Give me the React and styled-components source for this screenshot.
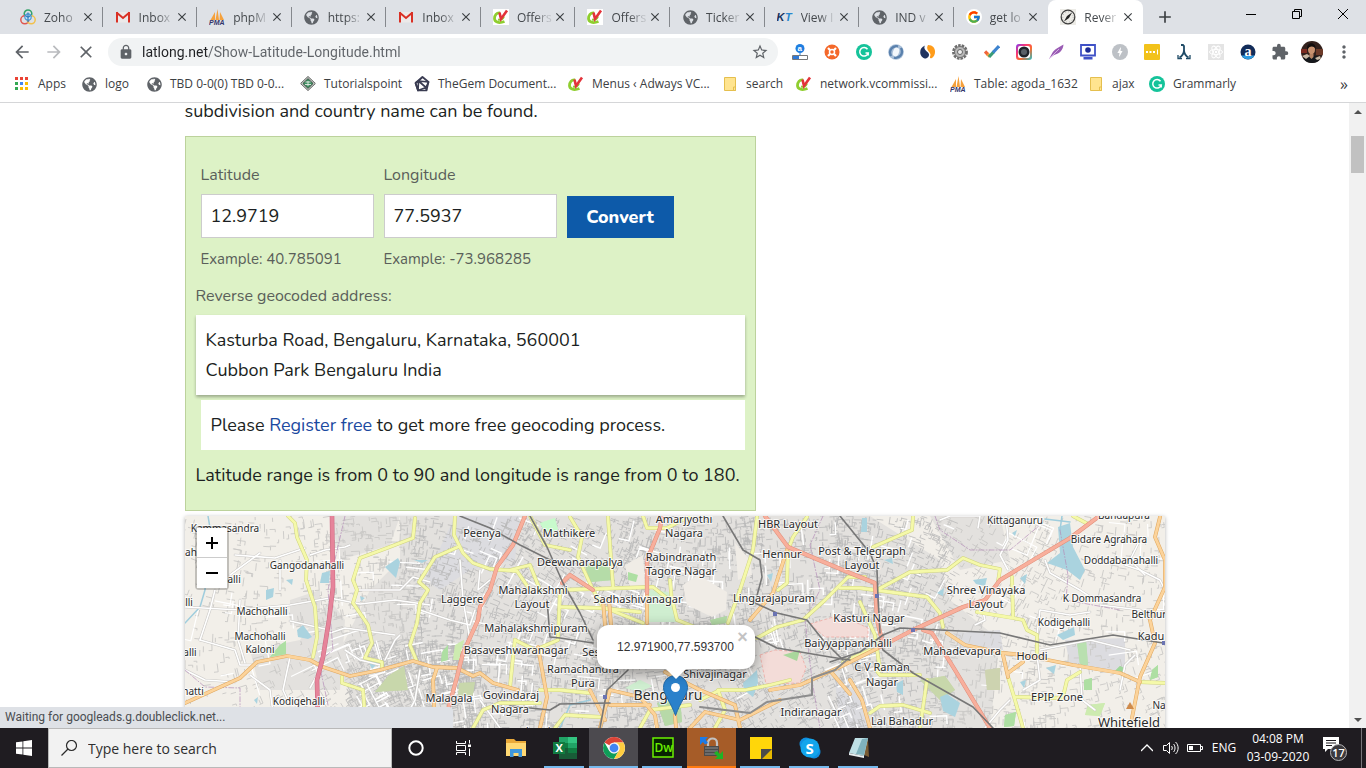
import React from 'react';
import styled, { createGlobalStyle, css } from 'styled-components';
import {
  MdExtension, MdLock, MdStarBorder, MdArrowBack, MdArrowForward,
  MdClose, MdMoreVert, MdAdd, MdBolt,
} from 'react-icons/md';
import { FaGlobeAmericas } from 'react-icons/fa';
import { FcGoogle } from 'react-icons/fc';

const UI = '"Segoe UI", "Open Sans", "Noto Sans", sans-serif';
const PAGE = 'Nunito, Lato, "Open Sans", sans-serif';

const GlobalStyle = createGlobalStyle`
  *, *::before, *::after { box-sizing: border-box; }
  html, body { margin: 0; padding: 0; }
  body { font-family: ${UI}; background: #fff; overflow: hidden; }
  button, input { font: inherit; color: inherit; margin: 0; }
  button { background: none; border: 0; padding: 0; }
  svg { display: block; flex: none; }
`;

const Screen = styled.div`
  display: flex;
  flex-direction: column;
  height: 100vh;
`;

/* ---------- tab strip ---------- */
const TabStrip = styled.header`
  display: flex;
  flex: none;
  height: 34px;
  padding-left: 8px;
  background: #dee1e6;
`;
const Tabs = styled.nav`
  display: flex;
  flex: 1;
  min-width: 0;
`;
const Tab = styled.div`
  display: flex;
  flex: 1 1 0;
  align-items: center;
  min-width: 0;
  padding: 0 7px 0 12px;
  position: relative;
  font-size: 12px;
  color: #45494d;
  ${(p) => p.$active ? css`
    background: #fff;
    border-radius: 8px 8px 0 0;
  ` : css`
    &::after {
      content: '';
      position: absolute;
      right: 0;
      top: 7px;
      height: 20px;
      width: 1px;
      background: ${p.$last ? 'transparent' : '#85888d'};
    }
  `}
`;
const TabTitle = styled.span`
  flex: 1;
  min-width: 0;
  margin: 0 0 0 8px;
  overflow: hidden;
  white-space: nowrap;
  mask-image: linear-gradient(90deg, #000 50%, rgba(0, 0, 0, 0.2) 90%);
`;
const TabClose = styled.button`
  display: grid;
  place-items: center;
  width: 16px;
  height: 16px;
  color: #3c4043;
`;
const NewTab = styled.button`
  display: grid;
  place-items: center;
  width: 44px;
  margin-right: 41px;
  color: #3c4043;
`;
const WindowButton = styled.button`
  display: grid;
  place-items: center;
  width: 46px;
  height: 28px;
`;

/* ---------- toolbar ---------- */
const Toolbar = styled.div`
  display: flex;
  flex: none;
  align-items: center;
  height: 36px;
  padding: 0 6px;
  background: #fff;
`;
const ToolButton = styled.button`
  display: grid;
  place-items: center;
  width: 32px;
  height: 32px;
  color: ${(p) => (p.$faded ? '#b9bbbe' : '#5f6368')};
`;
const AddressBar = styled.div`
  display: flex;
  flex: 1;
  align-items: center;
  gap: 8px;
  min-width: 0;
  height: 28px;
  margin: 0 6px;
  padding: 0 9px 0 10px;
  border-radius: 14px;
  background: #f1f3f4;
  color: #5f6368;
`;
const Url = styled.input`
  flex: 1;
  min-width: 0;
  border: 0;
  padding: 0;
  outline: 0;
  font-family: Roboto, sans-serif;
  font-size: 14px;
  background: linear-gradient(90deg, #202124 66px, #5f6368 66px);
  background-clip: text;
  -webkit-background-clip: text;
  -webkit-text-fill-color: transparent;
`;

/* ---------- bookmarks ---------- */
const Bookmarks = styled.nav`
  display: flex;
  flex: none;
  align-items: center;
  height: 33px;
  padding: 0 14px 4px;
  border-bottom: 1px solid #d5d6d8;
  padding-top: 0;
`;
const Bookmark = styled.a`
  display: flex;
  align-items: center;
  gap: 8px;
  flex: 0 1 ${(p) => p.$width}px;
  min-width: 0;
  padding-right: 8px;
  font-size: 12px;
  line-height: 20px;
  color: #3c4043;
  text-decoration: none;
  white-space: nowrap;
`;
const More = styled.button`
  margin-left: auto;
  padding-right: 4px;
  font-size: 16px;
  line-height: 20px;
  color: #3c4043;
`;

/* ---------- web page ---------- */
const Viewport = styled.div`
  display: flex;
  flex: 1;
  min-height: 0;
  position: relative;
  overflow: hidden;
`;
const Main = styled.main`
  flex: 1;
  min-width: 0;
  overflow: hidden;
  font-family: ${PAGE};
  font-size: 18px;
  line-height: 30px;
  color: #1c1f22;
`;
const Column = styled.div`
  max-width: 980px;
  margin: -7px auto 0;
`;
const Paragraph = styled.p`
  margin: 0 0 10px;
`;
const Panel = styled.section`
  max-width: 571px;
  padding: 23px 10px 20px;
  border: 1px solid #bcd29c;
  background: #ddf2c6;
`;
const Form = styled.form`
  display: flex;
  gap: 10px;
  padding-left: 5px;
  margin-bottom: 7px;
`;
const Field = styled.div`
  display: flex;
  flex-direction: column;
  width: 173px;
`;
const Label = styled.label`
  font-size: 16px;
  color: #5a5f5a;
`;
const Hint = styled.span`
  font-size: 15px;
  color: #5a5f5a;
`;
const TextInput = styled.input`
  height: 44px;
  margin: 4px 0 6px;
  padding: 0 9px;
  width: 100%;
  border: 1px solid #ccc;
  background: #fff;
`;
const Convert = styled.button`
  align-self: flex-start;
  width: 107px;
  height: 42px;
  margin-top: 36px;
  background: #0d5aa9;
  color: #fff;
  font-weight: 800;
`;
const AddressTitle = styled.div`
  margin-bottom: 4px;
  font-size: 16px;
  color: #5a5f5a;
`;
const Address = styled.address`
  padding: 10px;
  background: #fff;
  font-style: normal;
  box-shadow: 0 2px 3px rgba(0, 0, 0, 0.3);
`;
const Notice = styled.div`
  margin: 5px 0 10px 5px;
  padding: 10px;
  background: #fff;
`;
const Link = styled.a`
  color: #1b49a0;
  text-decoration: none;
`;

/* ---------- map ---------- */
const MapBox = styled.section`
  position: relative;
  height: 300px;
  margin-top: 5px;
  overflow: hidden;
  background: #f2efe9;
  box-shadow: 0 1px 4px rgba(0, 0, 0, 0.3);
  font-family: "Liberation Sans", Arial, sans-serif;
`;
const ZoomBar = styled.div`
  position: absolute;
  left: 10px;
  top: 10px;
  border: 2px solid rgba(0, 0, 0, 0.2);
  border-radius: 4px;
  background-clip: padding-box;
`;
const ZoomButton = styled.button`
  display: grid;
  place-items: center;
  width: 30px;
  height: 30px;
  background: #fff;
  color: #000;
  &:first-child { border-bottom: 1px solid #ccc; }
`;
const Popup = styled.div`
  position: absolute;
  left: 412px;
  top: 109px;
  width: 158px;
  height: 44px;
  border-radius: 12px;
  background: #fff;
  box-shadow: 0 3px 14px rgba(0, 0, 0, 0.4);
  font-size: 12px;
  line-height: 44px;
  text-align: center;
  color: #333;
  &::after {
    content: '';
    position: absolute;
    left: 69px;
    top: 44px;
    border: 10px solid transparent;
    border-top-color: #fff;
    border-bottom: 0;
  }
`;
const PopupClose = styled.button`
  position: absolute;
  right: 4px;
  top: 4px;
  width: 16px;
  height: 16px;
  font-size: 18px;
  line-height: 16px;
  font-weight: 700;
  color: #c3c3c3;
`;
const Pin = styled.svg`
  position: absolute;
  left: 478px;
  top: 159px;
`;

const ScrollBar = styled.div`
  display: flex;
  flex: none;
  flex-direction: column;
  align-items: center;
  width: 17px;
  background: #f1f1f1;
`;
const ScrollArrow = styled.button`
  display: grid;
  place-items: center;
  width: 17px;
  height: 17px;
`;
const ScrollThumb = styled.div`
  width: 13px;
  height: 37px;
  margin: 16px 0 auto;
  background: #c1c1c1;
`;
const StatusBubble = styled.div`
  position: absolute;
  left: 0;
  bottom: 0;
  width: 453px;
  height: 21px;
  padding-left: 5px;
  border-radius: 0 4px 0 0;
  background: #dee1e6;
  font-family: Roboto, sans-serif;
  font-size: 12px;
  line-height: 21px;
  color: #4a4d51;
`;

/* ---------- taskbar ---------- */
const Taskbar = styled.footer`
  display: flex;
  flex: none;
  height: 40px;
  background: #1f1c21;
  color: #fff;
`;
const TaskButton = styled.button`
  display: grid;
  place-items: center;
  position: relative;
  width: ${(p) => p.$width || 49}px;
  height: 40px;
  background: ${(p) => p.$bg || 'none'};
  &::after {
    content: '';
    position: absolute;
    left: ${(p) => (p.$bg ? 0 : 4)}px;
    right: ${(p) => (p.$bg ? 0 : 5)}px;
    bottom: 0;
    height: 2px;
    background: ${(p) => p.$line || 'transparent'};
  }
`;
const Apps = styled.div`
  display: flex;
  padding-left: 3px;
  margin-right: auto;
`;
const SearchBox = styled.label`
  display: flex;
  align-items: center;
  gap: 11px;
  width: 344px;
  padding: 0 12px;
  border: 1px solid #b9b9b9;
  background: #f2f2f2;
  color: #2b2b2b;
`;
const SearchInput = styled.input`
  flex: 1;
  min-width: 0;
  border: 0;
  padding: 0;
  background: none;
  outline: 0;
  font-size: 14px;
  &::placeholder { color: #2f2f2f; opacity: 1; }
`;
const TrayItem = styled.button`
  display: grid;
  place-items: center;
  align-content: center;
  width: ${(p) => p.$width}px;
  font-size: 12px;
  line-height: 18px;
  white-space: nowrap;
`;
const ShowDesktop = styled.button`
  width: 5px;
  margin-left: 6px;
  border-left: 1px solid #77757a;
`;

/* ---------- icons ---------- */
const Svg = ({ size = 16, children, ...rest }) => (
  <svg width={size} height={size} viewBox="0 0 16 16" fill="none" aria-hidden="true" {...rest}>{children}</svg>
);
const IconCell = styled.span`
  display: grid;
  place-items: center;
  flex: none;
  width: 16px;
  height: 16px;
`;
const Globe = () => <IconCell><FaGlobeAmericas size={15} color="#5f6368" /></IconCell>;
const Zoho = () => (
  <Svg strokeWidth="1.500">
    <circle cx="8" cy="4.800" r="3.800" stroke="#35a26b" />
    <circle cx="4.800" cy="10.800" r="4" stroke="#e0574f" />
    <circle cx="11.200" cy="10.800" r="4" stroke="#f2c14b" />
    <circle cx="8" cy="8" r="3.200" fill="#cfe3f3" stroke="#4b9ad6" strokeWidth="1.200" />
    <path d="M8 3.500V13M5.500 6.500 8 8.500l2.500-2" stroke="#2f7fc1" strokeWidth="1.200" />
  </Svg>
);
const Gmail = () => (
  <Svg>
    <path d="M1 3h14v10.500H1z" fill="#ece9e9" />
    <path d="M1.500 3.500 8 9l6.500-5.500" stroke="#d93025" strokeWidth="2" />
    <path d="M1 3h2v10.500H1zM13 3h2v10.500h-2z" fill="#d93025" />
  </Svg>
);
const Pma = () => (
  <Svg>
    <path d="M1.500 11 6 3v8zM6.500 11 8.500 0l1.500 11zM10.500 11l.5-8L15 11z" fill="#f5a13c" />
    <text x="0" y="15.500" fontSize="7" fontWeight="700" fontStyle="italic" fontFamily="Liberation Sans" fill="#34356b">PMA</text>
  </Svg>
);
const Vcom = ({ bg }) => (
  <Svg>
    {bg && <path d="M0 0h16v16H0z" fill="#fff" />}
    <path d="M7 4C3.500 3.500 1.500 6.500 1.500 9.500S5 15 11.500 12.500" stroke="#8fce2f" strokeWidth="2.800" />
    <path d="M5 10.500c3 .8 5-.5 6-3" stroke="#8fce2f" strokeWidth="2" />
    <path d="M6.500 3.500 8 10 14 1.500" stroke="#e3333a" strokeWidth="2.600" />
  </Svg>
);
const Kt = () => (
  <Svg>
    <text x="-0.500" y="12" fontSize="11" fontWeight="700" fontStyle="italic" fontFamily="Liberation Sans" fill="#16305e">K</text>
    <text x="8" y="12" fontSize="11" fontWeight="700" fontStyle="italic" fontFamily="Liberation Sans" fill="#2787cf">T</text>
  </Svg>
);
const GoogleIcon = () => (
  <svg width="16" height="16" viewBox="0 0 16 16" aria-hidden="true">
    <circle cx="8" cy="8" r="8" fill="#fff" />
    <FcGoogle x="1" y="1" size={14} />
  </svg>
);
const Compass = () => (
  <Svg>
    <path d="M0 0h16v16H0z" fill="#ecebe6" />
    <circle cx="8" cy="8" r="6.800" stroke="#3d3d3d" strokeWidth="1.200" />
    <circle cx="8" cy="8" r="5.200" stroke="#8d8d8d" strokeWidth="0.600" strokeDasharray="1 2" />
    <path d="m12 3.500-3 5.500-2-2zM4 12.500 7 7l2 2z" fill="#222" />
  </Svg>
);
const AppsIcon = () => (
  <Svg>
    {['#ea4335', '#ea4335', '#ea4335', '#34a853', '#4285f4', '#fbbc04', '#34a853', '#fbbc04', '#fbbc04'].map((c, i) => (
      <rect key={i} x={1 + (i % 3) * 5} y={1 + Math.floor(i / 3) * 5} width="3" height="3" fill={c} />
    ))}
  </Svg>
);
const Tutorials = () => (
  <Svg>
    <path d="m8 .500 7.300 7L8 14.500.700 7.500z" fill="#e4ebe4" stroke="#4d4d4d" />
    <path d="m8 2.500 5.200 5L8 12.500l-5.200-5z" fill="#3f8f62" stroke="#333" strokeWidth=".8" />
    <path d="M5.500 6h5M8 5v5M5 8.500h6" stroke="#e4ebe4" strokeWidth=".9" />
  </Svg>
);
const Gem = () => (
  <Svg stroke="#3a3c52" strokeWidth="1.700" strokeLinejoin="round">
    <path d="m8.500 1 6 5-2 8.500H4L1.500 7z" />
    <path d="m8.500 1-4 4L4 14.500 12 11.500 14.500 6 4.500 5M4.500 5 12 11.500M1.500 7l3-2M1.500 7 4 14.500M12 11.500l.5 3" />
  </Svg>
);
const Folder = () => (
  <Svg>
    <path d="M2.500 1.500h11v13h-11z" fill="#ffe48f" stroke="#e5bf4e" />
    <path d="M11.500 14.500v-3.500h2v3.500z" fill="#ffe48f" stroke="#e5bf4e" />
  </Svg>
);
const Grammarly = () => (
  <Svg>
    <circle cx="8" cy="8" r="8" fill="#15c39a" />
    <path d="M11.500 5.200A4.300 4.300 0 1 0 12.200 9H9.500m2.700 0v2.500" stroke="#fff" strokeWidth="1.500" />
  </Svg>
);
const extensionIcons = [
  ['Alexa rank', <Svg key="i"><circle cx="8" cy="4.500" r="4.500" fill="#1e7de0" /><text x="5.500" y="7" fontSize="8" fontWeight="700" fontFamily="Liberation Sans" fill="#fff">a</text><path d="M.5 11.500h15v4H.5z" fill="#fff" stroke="#777" /><path d="M1 12h6v3H1z" fill="#2f79d6" /><path d="M8 9v2" stroke="#1e7de0" /></Svg>],
  ['Help ring', <Svg key="i"><circle cx="8" cy="8" r="7.500" fill="#f4682a" /><circle cx="8" cy="8" r="2.500" fill="#f4682a" stroke="#fff" strokeWidth="1.500" /><path d="m4 4 2 2m4 4 2 2m0-8-2 2m-4 4-2 2" stroke="#fff" strokeWidth="2.200" /></Svg>],
  ['Grammarly', <Grammarly key="i" />],
  ['Swirl', <Svg key="i"><circle cx="8" cy="8" r="7.800" fill="#a9bfd8" /><path d="M3 12C0 6 5 1 10 2.500M13 4c3 6-2 11-7 9.500" stroke="#5a81ad" strokeWidth="2.400" /><ellipse cx="8" cy="8" rx="3" ry="4.500" fill="#f3f7fb" transform="rotate(20 8 8)" /></Svg>],
  ['Similar', <Svg key="i"><path d="M5 1.500c-2 3 1 5 3 7s1 5-2 6C-1 14-2 4 5 1.500z" fill="#20335f" /><path d="M8 1c8 0 9 9 4 13-3 1-2-1-1.500-3C11 8 5 6 8 1z" fill="#ff9c1a" /></Svg>],
  ['Gear', <Svg key="i"><circle cx="8" cy="8" r="6.500" stroke="#6e6e6e" strokeWidth="2.800" strokeDasharray="2.500 1" /><circle cx="8" cy="8" r="5.500" fill="#b8b8b8" stroke="#707070" /><circle cx="8" cy="8" r="2.500" fill="#eee" stroke="#666" /></Svg>],
  ['Checker', <Svg key="i"><path d="m1 7.500 3 3" stroke="#f1643b" strokeWidth="3.200" /><path d="m3.500 10 2.500 2.500" stroke="#f0a23b" strokeWidth="3.200" /><path d="m5 13 5-5.500" stroke="#3a9c77" strokeWidth="3.200" /><path d="m9 8.500 6-6.500" stroke="#3d83cf" strokeWidth="3.200" /></Svg>],
  ['Camera', <svg key="i" width="16" height="16" viewBox="0 0 16 16" aria-hidden="true"><defs><linearGradient id="rainbow" x1="0" y1="0" x2="1" y2="1"><stop offset="0" stopColor="#7a3af0" /><stop offset=".3" stopColor="#f6357d" /><stop offset=".6" stopColor="#fb6b30" /><stop offset="1" stopColor="#21bfc6" /></linearGradient></defs><rect width="16" height="16" rx="3" fill="url(#rainbow)" /><rect x="2" y="2" width="12" height="12" rx="2" fill="#fff" /><circle cx="8" cy="8" r="5.500" fill="#20242b" /><circle cx="8" cy="8" r="3" fill="#596068" /></svg>],
  ['Feather', <Svg key="i"><path d="M1 15 4 9.500C6 5.500 11 3 15.500.500 15 6 12 9.500 6 11z" fill="#9a5cb4" /><path d="M1 15 11 5" stroke="#e2c4ee" strokeWidth=".8" /></Svg>],
  ['Screen', <Svg key="i"><path d="M1 1h14v10.500H1z" fill="#fff" stroke="#3f51c7" strokeWidth="1.800" /><circle cx="8" cy="6" r="2.800" fill="#1d2b94" /><path d="M3.500 13h9v2.500h-9z" fill="#3f51c7" /></Svg>],
  ['Bolt', <svg key="i" width="16" height="16" viewBox="0 0 16 16" aria-hidden="true"><circle cx="8" cy="8" r="8" fill="#bdc1c6" /><MdBolt x="2" y="2" size={12} color="#fff" /></svg>],
  ['Password dots', <Svg key="i"><rect width="16" height="16" rx="1" fill="#f2c21a" /><path d="M2 7h2v2H2zM5.500 7h2v2h-2zM9 7h2v2H9z" fill="#fff" /><path d="M13.500 5.500v5" stroke="#fff" /></Svg>],
  ['Split', <Svg key="i" stroke="#1e4a66" strokeWidth="1.800"><path d="M5 1h2l1 1v4c0 4-2 6-4.500 7.500M8 6c0 4 2 6 4.500 7.500" /><path d="M6 14.500H2V11M10 14.500h4V11" strokeWidth="1.300" /></Svg>],
  ['React tools', <Svg key="i"><path d="M0 0h16v16H0z" fill="#e4e4e4" /><g stroke="#fff"><ellipse cx="8" cy="8" rx="6.500" ry="2.600" /><ellipse cx="8" cy="8" rx="6.500" ry="2.600" transform="rotate(60 8 8)" /><ellipse cx="8" cy="8" rx="6.500" ry="2.600" transform="rotate(120 8 8)" /></g><circle cx="8" cy="8" r="1.200" fill="#fff" /></Svg>],
  ['Amazon', <Svg key="i"><circle cx="8" cy="8" r="7.500" fill="#122c59" /><path d="M1.500 11.500a7.500 7.500 0 0 0 13 0z" fill="#2e9be0" /><text x="4.500" y="12" fontSize="14" fontWeight="700" fontFamily="Liberation Serif" fill="#fff">a</text></Svg>],
];

const Avatar = () => (
  <svg width="22" height="22" viewBox="0 0 22 22" aria-hidden="true">
    <defs><clipPath id="face"><circle cx="11" cy="11" r="11" /></clipPath></defs>
    <g clipPath="url(#face)">
      <path d="M0 0h22v22H0z" fill="#33211c" />
      <path d="M0 8h6v4H0z" fill="#7c2c22" /><path d="M15 8h7v6h-7z" fill="#6d3a28" />
      <path d="M1 22c1-7 5-8 8-7 5-1 10 0 11 7z" fill="#15181c" />
      <ellipse cx="10.500" cy="8.500" rx="3.500" ry="5" fill="#c9926f" />
      <path d="M6.500 9C4 0 16 0 14.500 8.500 14 5 8 4 6.500 9z" fill="#120e0d" />
      <path d="M8.500 13h4v3l-2 2-2-2z" fill="#b98463" />
      <path d="m1 15 5-2 3 2-4 3zM14 17l5-2 1 3-4 1z" fill="#c9b8a4" />
    </g>
  </svg>
);

const WindowsLogo = () => <Svg><path d="m0 2.300 6.500-.9v6.200H0zM7.300 1.300 16 0v7.600H7.300zM0 8.400h6.500v6.200L0 13.700zM7.300 8.400H16V16l-8.700-1.200z" fill="#fff" /></Svg>;
const Magnifier = () => <Svg stroke="#2b2b2b" strokeWidth="1.200"><circle cx="10.500" cy="5.500" r="5" /><path d="M7 9 .5 15.500" /></Svg>;
const TaskView = () => <Svg stroke="#fff"><path d="M.5 1v2.500h9V1M.5 15v-2.500h9V15M.5 5.500h9v5h-9zM13.500 0v3.500M13.500 8.500V16" /><path d="M12 4.500h3v2.500h-3z" fill="#fff" stroke="none" /></Svg>;
const Explorer = () => (
  <svg width="22" height="22" viewBox="0 0 22 22" aria-hidden="true"><path d="M1 2h8l2 2h10v15H1z" fill="#e9a93a" /><path d="M1 6h20v13H1z" fill="#ffd873" /><path d="M5 20v-8h12v8h-3.500v-4h-5v4z" fill="#3f97dc" /></svg>
);
const Excel = () => (
  <svg width="24" height="22" viewBox="0 0 24 22" aria-hidden="true"><path d="M6 0h9v6H6z" fill="#21a366" /><path d="M15 0h9v6h-9z" fill="#33c481" /><path d="M6 6h9v5H6z" fill="#107c41" /><path d="M15 6h9v5h-9z" fill="#21a366" /><path d="M6 11h18v11H6z" fill="#185c37" /><path d="M15 11h9v5h-9z" fill="#107c41" /><path d="M0 5h12v12H0z" fill="#107c41" /><text x="2.500" y="15" fontSize="11" fontWeight="700" fontFamily="Open Sans" fill="#fff">X</text></svg>
);
const Chrome = () => (
  <svg width="22" height="22" viewBox="0 0 22 22" aria-hidden="true"><circle cx="11" cy="11" r="11" fill="#fff" /><path d="M11 11 1.500 5.500A11 11 0 0 1 20.500 5.500H11z" fill="#db4437" /><path d="M1.500 5.500A11 11 0 0 0 11 22l4.800-8.300L11 16.500 6.200 13.800z" fill="#0f9d58" /><path d="M20.500 5.500A11 11 0 0 1 11 22l4.800-8.300a5.500 5.500 0 0 0-4.800-8.200z" fill="#ffcd40" /><circle cx="11" cy="11" r="5.500" fill="#f1f1f1" /><circle cx="11" cy="11" r="4.300" fill="#4285f4" /></svg>
);
const Dreamweaver = () => (
  <svg width="22" height="22" viewBox="0 0 22 22" aria-hidden="true"><path d="M1 1h20v19H1z" fill="#072401" stroke="#6bf100" strokeWidth="1.500" /><text x="2.500" y="15" fontSize="12" fontFamily="Open Sans" fontWeight="600" fill="#6bf100">Dw</text></svg>
);
const RemoteLock = () => (
  <svg width="24" height="24" viewBox="0 0 24 24" fill="none" aria-hidden="true"><path d="M8 11V7c0-6 9-6 9 0v4" stroke="#c2c2c2" strokeWidth="2.200" /><path d="M4 10h15v10H4z" fill="#4b4b4b" /><path d="M5 12h13M5 15h13M5 18h13" stroke="#8d8d8d" /><path d="M0 1h8L5.500 3.500 8 7 5 8.500 3 6 0 9z" fill="#1c7be8" /><path d="M23 23h-8l2.500-2.500L14 17l3-2 3 3 3-3z" fill="#1fb326" /></svg>
);
const Sticky = () => <svg width="22" height="22" viewBox="0 0 22 22" aria-hidden="true"><path d="M0 0h22v12L12 22H0z" fill="#ffd60a" /><path d="M11 22V12h11v1l-9 9z" fill="#4a4a4a" /><path d="M22 12v10H12z" fill="#e6b800" /></svg>;
const Skype = () => (
  <svg width="22" height="22" viewBox="0 0 22 22" aria-hidden="true"><circle cx="7" cy="7" r="6.500" fill="#0f8fe0" /><circle cx="15" cy="15" r="6.500" fill="#0f8fe0" /><circle cx="11" cy="11" r="9.500" fill="#12a5ec" /><text x="6.500" y="16.500" fontSize="15" fontWeight="700" fontFamily="Open Sans" fill="#fff">S</text></svg>
);
const Notepad = () => <svg width="22" height="22" viewBox="0 0 22 22" aria-hidden="true"><path d="m7 1 13 2 1 17-5-2z" fill="#7a5b33" /><path d="M7 1h13l-4 18-15-3z" fill="#bfe0e6" /><path d="m14 2 6-1-4 17-8-1z" fill="#7fb2bd" /><path d="m1 16 15 3v2L1 18z" fill="#e8eef0" /></svg>;

/* ---------- map drawing ---------- */
const seeded = (seed) => () => {
  seed = (seed * 1664525 + 1013904223) % 4294967296;
  return seed / 4294967296;
};
const buildStreets = (seed, count, areas, min, max) => {
  const rnd = seeded(seed);
  let d = '';
  for (let i = 0; i < count; i += 1) {
    const [x0, y0, w, h] = areas[Math.floor(rnd() * areas.length)];
    const x = x0 + rnd() * w;
    const y = y0 + rnd() * h;
    const tilt = Math.sin(x / 70) * 0.3 + Math.cos(y / 45) * 0.25;
    const len = min + rnd() * (max - min);
    const a = tilt + (rnd() > 0.5 ? Math.PI / 2 : 0);
    const dx = Math.cos(a) * len;
    const dy = Math.sin(a) * len;
    d += `M${x.toFixed(1)} ${y.toFixed(1)}l${dx.toFixed(1)} ${dy.toFixed(1)}`;
    if (rnd() > 0.5) d += `l${(-dy * 0.5).toFixed(1)} ${(dx * 0.5).toFixed(1)}`;
  }
  return d;
};
const dense = [[400, 516, 130, 220], [520, 516, 130, 220], [620, 516, 130, 220], [740, 516, 130, 220], [830, 516, 120, 220], [345, 640, 130, 90]];
const sparse = [[185, 516, 220, 220], [310, 516, 110, 220], [930, 516, 120, 220], [1020, 516, 145, 220]];
const greyDense = buildStreets(7, 5200, dense, 3, 9);
const greySparse = buildStreets(11, 1700, sparse, 3, 9);
const whiteDense = buildStreets(19, 260, dense, 8, 24);
const whiteSparse = buildStreets(23, 50, sparse, 12, 34);

const residential = [
  'M400 516H870L940 560 950 600 1000 640 990 728H345L350 690 330 660 345 640 370 590 400 560Z',
  'M250 650 300 640 330 600 345 620 340 690 260 690Z',
  'M290 600 320 590 320 630 290 625Z', 'M930 516H1000L1010 560 960 570Z', 'M330 516H400L390 545 340 560Z',
];
const industrial = ['M455 516H520L515 560 470 570 440 590 425 580Z', 'M955 633 1000 630 1003 650 960 650Z', 'M1065 640 1125 638 1125 672 1070 665Z', 'M835 680 870 700 870 728 840 728Z'];
const greens = [
  ['M280 645 286 641V654L270 657Z', '#aedfa3'], ['M388 676 404 666 408 690 375 692Z', '#c8d7ab'], ['M455 645 464 640 459 660 453 660Z', '#cdebb0'],
  ['M442 652 448 645V660L441 662Z', '#aedfa3'], ['M459 683 475 682 473 695 458 697Z', '#c8d7ab'], ['M585 565 606 560 613 580 590 582Z', '#b5dca8'],
  ['M540 523 555 518 558 530 545 533Z', '#c8facc'], ['M648 590 668 592 677 622 648 622Z', '#cfeed0'], ['M628 572 638 575 636 582 628 580Z', '#aedfa3'],
  ['M657 703 680 698 682 722 665 726Z', '#b7d9a8'], ['M920 680 945 676 955 690 940 700Z', '#c8d7ab'], ['M985 670 1000 668 1000 690 987 690Z', '#cdd3b0'],
  ['M1077 642 1086 640 1088 665 1080 665Z', '#b9e0b0'], ['M1005 715 1016 712 1014 726 1004 727Z', '#aedfa3'], ['M1084 680 1092 678 1092 690 1084 690Z', '#aedfa3'],
  ['M1120 666 1124 668 1124 673 1115 671Z', '#9fd79a'], ['M710 620 727 616 726 623 712 625Z', '#b5dca8'], ['M783 655 800 650 797 661Z', '#a9d79c'],
  ['M1088 705 1105 703 1100 716 1085 715Z', '#cdebb0'], ['M1152 670 1158 665 1158 677 1150 680Z', '#aedfa3'], ['M625 688 640 680 652 686 640 692Z', '#cfeed0'],
];
const lakes = [
  'M385 567 398 558 400 562 396 578Z', 'M322 573 330 571 329 583 320 583Z', 'M266 590 274 588 273 597 266 600Z', 'M286 580 293 579 292 585Z',
  'M297 630 303 625 312 637 308 639 298 637Z', 'M368 661 379 662 372 669Z', 'M414 560 428 560 422 563Z', 'M360 596 365 598 361 601Z',
  'M254 700 258 697 257 704Z', 'M1058 527 1070 523 1073 547 1085 570 1080 580 1067 570 1047 563 1060 553Z', 'M940 697 947 694 960 703 955 717 943 711Z',
  'M743 683 757 670 758 683 753 697 744 690Z', 'M1057 635 1074 627 1075 635 1063 640Z', 'M973 580 987 578 985 586 976 584Z', 'M1020 578 1027 574 1025 584Z',
  'M1046 668 1056 665 1054 674Z', 'M896 684 903 680 903 695 897 692Z', 'M1020 682 1026 680 1024 688Z', 'M767 575 773 573 771 582Z', 'M862 518H867V532H861Z',
  'M884 560 892 558 893 564Z', 'M937 593 944 588 943 596Z', 'M1012 533 1017 530 1015 536Z',
];
const military = ['M810 624 840 615 868 628 868 637 825 637Z', 'M760 655 775 650 800 652 806 668 800 683 766 684Z'];
const bareLand = ['M683 585 698 575 727 592 726 610 712 617 687 605Z', 'M625 565 643 555 645 585 630 588Z', 'M735 543 750 560 752 575 738 580Z'];
const yellow = [
  '288,516 295,523 297,537 307,560 306,580 315,607 317,637 313,657', '415,518 413,538 387,548 360,558 353,580 357,590 353,603 368,625 372,643 365,658 382,662 382,668',
  '455,516 454,535 463,553 473,563 490,569 517,571 530,590', '458,547 435,557 419,582 428,590 420,603 417,623 410,645 417,662', '342,677 342,683 363,690 366,728',
  '515,640 513,657 510,687', '473,728 483,710 500,703 540,703', '757,517 753,550 740,590 728,623', '807,517 793,537 788,550 787,583 778,590',
  '757,638 777,627 803,620 825,600 848,577 865,577', '560,590 653,587 673,603 677,620 710,633 728,640', '570,517 582,537 578,557 593,590 603,607 643,623', '608,517 613,587',
  '560,590 558,640 535,650 515,640', '560,607 600,608 640,612', '510,570 530,565 540,590', '643,516 647,528 667,528 690,516', '670,580 672,603', '530,516 545,545 570,550',
  '877,590 910,572 947,570 963,558 980,565 1000,569 998,582', '840,588 860,588 927,597 940,613 943,627', '873,547 912,530 913,517', '977,612 1013,618 1023,620 1027,630 1037,635 1037,653',
  '1012,577 1013,617', '1140,682 1165,683', '1008,677 1015,700 1023,728', '1063,697 1067,680 1080,672', '1015,697 1063,698', '870,713 880,706 903,705 930,713', '860,602 875,635 880,670',
  '843,662 870,650', '927,680 920,728', '700,700 720,690 745,690 770,685 790,680', '718,690 725,710 715,728', '540,690 560,690 590,693', '555,728 565,715 600,717', '640,728 650,710 690,705', '1073,516 1088,524', '877,671 880,675 920,675',
];
const orange = [
  '185,703 240,678 257,662 287,656 310,660 323,667 350,676 380,670 413,661 433,667 457,668 473,676 480,673 493,683 518,690', '437,668 433,680 435,728',
  '788,547 773,593 750,620', '647,593 647,623', '538,647 547,697 540,728', '600,728 610,690 640,697 655,715 657,728', '603,600 605,625', '609,600 611,625', '880,647 840,667 800,685 770,690',
  '947,633 965,645 1003,653 1023,655 1073,665 1120,673 1140,682', '1160,517 1155,537 1165,560 1165,587 1150,620 1155,643 1140,677 1130,728', '1003,655 1008,677', '1008,673 1023,662',
  '665,672 700,690 735,705 740,728', '675,715 676,728', '850,680 862,700 870,728', '590,690 605,720', '610,705 650,705', '690,728 705,712 740,720 780,700', '832,673 850,694',
];
const red = [
  '525,516 513,545 497,567 490,590 480,607 478,620 463,653 457,677 443,728', '662,516 660,528 647,560 647,593', '765,516 788,547 850,573 875,583 877,620 882,640',
  '562,583 570,575 593,590', '1098,517 1070,538 1000,580 985,600 963,607 913,630 880,647', '923,630 932,633 955,670 990,728',
];
const rail = [
  '460,516 490,528 520,545 560,565', '530,516 547,547 563,583 580,613 593,640', '628,670 607,690 600,728', '547,600 550,637 560,638 593,643', '723,516 743,550 760,560 762,577 755,603 777,613 807,620 823,640 843,660',
  '755,637 777,648 830,657 850,660', '840,516 870,553 877,570 878,597 880,633', '883,635 900,628 1000,633 1050,645 1113,635 1163,643', '880,640 883,650 913,673 973,707 993,728', '830,662 860,652 883,635', '510,706 550,710 560,704 610,703',
];
const metro = ['700,707 750,713 767,702 812,695 812,678 835,670 850,657'];
const water = ['208,516 212,540 206,570 205,590 200,607 185,623', '560,728 570,705 590,700', '1045,519 1070,522', '1062,516 1060,530'];
const borders = ['345,516 328,590 333,650 315,665', '185,670 205,687 240,688 240,728', '935,516 940,530 970,550 1010,550 1040,525', '1060,530 1068,575 1066,600 1120,610', '823,516 810,545 820,590 805,620 812,680 820,728', '321,672 328,705'];
const minor = [
  '235,555 275,558 305,548', '230,575 260,553', '185,607 240,610 290,605 330,598 360,604 395,600 430,605', '280,560 280,590', '200,640 210,610 215,590', '200,640 235,650 240,665 257,665', '240,600 238,640 245,663',
  '310,555 325,550 345,547 350,545', '290,621 325,629 330,633 345,628 395,635', '357,590 400,590 413,577 430,582', '185,670 205,680 235,682', '250,675 270,690 275,728', '290,657 283,690 290,705', '310,688 320,670',
  '345,650 360,660 380,665', '385,660 395,640 400,635', '420,610 450,620 470,625 475,610', '480,570 478,590 490,580', '460,560 463,600 470,640', '940,520 950,516 980,516 978,528', '1006,516 1008,540 1000,555 1008,570',
  '1045,560 1050,573 1080,590 1095,600', '1100,605 1140,610 1150,620', '1125,565 1140,570 1160,580 1165,590', '1037,635 1040,610 1070,615 1090,612', '1037,655 1040,680 1023,690', '1080,665 1082,700 1095,710', '1140,540 1130,560 1145,575',
  '480,700 500,728', '420,670 415,700 400,728', '980,600 985,620 975,625', '1010,700 1000,710 985,728', '1135,655 1125,665 1120,690', '1040,650 1090,640 1130,650',
];
const towns = [
  ['Kammasandra', 225, 532, 10], ['ah', 191, 556, 10], ['halli', 231, 583, 10], ['lli', 189, 606, 10], ['alli', 190, 656, 10], ['hatti', 193, 695, 10],
  ['Gangodanahalli', 307, 569, 10], ['Machohalli', 262, 615, 10], ['Machohalli', 260, 640, 10], ['Kaloni', 260, 653, 10], ['Kodigehalli', 299, 705, 10], ['Peenya', 482, 537, 11], ['Mathikere', 569, 537, 11],
  ['Laggere', 462, 603, 11], ['Mahalakshmi', 533, 594, 11], ['Layout', 532, 608, 11], ['Mahalakshmipuram', 536, 632, 11], ['Basaveshwaranagar', 516, 654, 11], ['Malagala', 449, 702, 11], ['Govindaraj', 511, 699, 11], ['Nagara', 510, 713, 11],
  ['Deewanarapalya', 580, 566, 11], ['Amarjyothi', 684, 523, 11], ['Nagara', 684, 537, 11], ['Rabindranath', 681, 561, 11], ['Tagore Nagar', 681, 575, 11], ['Sadhashivanagar', 638, 603, 11], ['HBR Layout', 788, 528, 11], ['Hennur', 782, 558, 11],
  ['Lingarajapuram', 774, 602, 11], ['Post & Telegraph', 862, 555, 11], ['Layout', 862, 569, 11], ['Kasturi Nagar', 869, 622, 11], ['Baiyyappanahalli', 848, 647, 11], ['Shree Vinayaka', 986, 594, 11], ['Layout', 986, 608, 11], ['Kittaganuru', 1015, 524, 10],
  ['Bandapura', 1124, 519, 10], ['Bidare Agrahara', 1109, 543, 10], ['Doddabanahalli', 1121, 564, 10], ['K Dommasandra', 1102, 602, 10], ['Kodigehalli', 1064, 626, 10], ['Belthur', 1149, 618, 10], ['Kadu', 1151, 640, 11], ['Mahadevapura', 962, 655, 11],
  ['Hoodi', 1032, 660, 11], ['C V Raman', 882, 671, 11], ['Nagar', 882, 686, 11], ['EPIP Zone', 1057, 701, 11], ['Na', 1159, 709, 10], ['Lal Bahadur', 902, 725, 11], ['Whitefield', 1129, 727, 13], ['Indiranagar', 811, 716, 11],
  ['Shivajinagar', 715, 678, 11], ['Ses', 591, 656, 11], ['Ramachandra', 583, 673, 11], ['Pura', 583, 687, 11], ['Bengaluru', 668, 700, 14], ['Jagajeevanram', 564, 735, 11],
];
const Lines = ({ items, color, casing, width }) => (
  <g strokeLinejoin="round" strokeLinecap="round">
    {casing && items.map((p) => <polyline key={`c${p}`} points={p} stroke={casing} strokeWidth={width + 1} />)}
    {items.map((p) => <polyline key={p} points={p} stroke={color} strokeWidth={width} />)}
  </g>
);
const CityMap = () => (
  <svg width="981" height="300" viewBox="185 516 981 300" fill="none" role="img" aria-label="Map of Bengaluru">
    <path d="M185 516h981v300H185z" fill="#f2efe9" />
    {residential.map((d) => <path key={d} d={d} fill="#e3e1de" />)}
    {industrial.map((d) => <path key={d} d={d} fill="#dcdce0" />)}
    {greens.map(([d, c]) => <path key={d} d={d} fill={c} />)}
    <path d={greyDense} stroke="#b9b9b9" strokeWidth="0.800" />
    <path d={greySparse} stroke="#c9c8c6" strokeWidth="0.900" />
    <path d={whiteDense} stroke="#fff" strokeWidth="1.400" />
    <path d={whiteSparse} stroke="#fff" strokeWidth="1.200" />
    {bareLand.map((d) => <path key={d} d={d} fill="#f0ece6" />)}
    {military.map((d) => <path key={d} d={d} fill="#f3dcd8" stroke="#f0b4ae" strokeDasharray="3 2" />)}
    {greens.map(([d, c]) => <path key={`t${d}`} d={d} fill={c} />)}
    {lakes.map((d) => <path key={d} d={d} fill="#aad3df" />)}
    <Lines items={water} color="#9fcddd" width={1.5} />
    <Lines items={minor} color="#fff" casing="#c9c7c4" width={1.6} />
    <g strokeDasharray="5 2 1 2" opacity="0.700"><Lines items={borders} color="#b48db8" width={1} /></g>
    <Lines items={yellow} color="#f5f9a9" casing="#cfd380" width={2.8} />
    <Lines items={orange} color="#fcd39a" casing="#dfa75f" width={2.8} />
    <Lines items={red} color="#f8af9c" casing="#e08e79" width={3.2} />
    <Lines items={['332,516 333,587 329,620 323,657 317,680 318,728']} color="#e6849a" casing="#c9667e" width={3.6} />
    <Lines items={metro} color="#8d8d8d" width={2} />
    <Lines items={rail} color="#777" width={1.6} />
    <g fill="#6b74b3"><path d="M773 612h4v4h-4zM875 594h4v4h-4zM911 628h4v4h-4zM603 695h4v4h-4zM1162 641h4v4h-4z" /></g>
    <path d="m1130 702 4 7h-8z" fill="#cf8a4a" />
    <g fontFamily='"Noto Sans", "Open Sans", sans-serif' textAnchor="middle" fill="#2b2b2b" stroke="#fff" strokeOpacity="0.800" strokeWidth="2" strokeLinejoin="round" paintOrder="stroke">
      {towns.map(([name, x, y, size]) => <text key={`${name}${x}${y}`} x={x} y={y} fontSize={size}>{name}</text>)}
    </g>
  </svg>
);

const tabs = [
  ['Zoho', <Zoho key="i" />], ['Inbox', <Gmail key="i" />], ['phpM', <Pma key="i" />], ['https:', <Globe key="i" />],
  ['Inbox', <Gmail key="i" />], ['Offers', <Vcom key="i" bg />], ['Offers', <Vcom key="i" bg />], ['Ticker', <Globe key="i" />],
  ['View I', <Kt key="i" />], ['IND v', <Globe key="i" />], ['get lo', <GoogleIcon key="i" />], ['Rever', <Compass key="i" />],
];
const bookmarks = [
  ['Apps', 67, <AppsIcon key="i" />], ['logo', 65, <Globe key="i" />], ['TBD 0-0(0) TBD 0-0...', 154, <Globe key="i" />], ['Tutorialspoint', 114, <Tutorials key="i" />],
  ['TheGem Document...', 154, <Gem key="i" />], ['Menus ‹ Adways VC...', 154, <Vcom key="i" />], ['search', 74, <Folder key="i" />], ['network.vcommissi...', 154, <Vcom key="i" />],
  ['Table: agoda_1632', 138, <Pma key="i" />], ['ajax', 61, <Folder key="i" />], ['Grammarly', 100, <Grammarly key="i" />],
];
const blue = '#76b9ed';

export default function App() {
  return (
    <Screen>
      <GlobalStyle />
      <TabStrip>
        <Tabs aria-label="Tabs">
          {tabs.map(([title, icon], i) => (
            <Tab key={i} $active={i === tabs.length - 1} $last={i === tabs.length - 2}>
              {icon}
              <TabTitle>{title}</TabTitle>
              <TabClose aria-label={`Close ${title}`}><MdClose size={14} /></TabClose>
            </Tab>
          ))}
        </Tabs>
        <NewTab aria-label="New tab"><MdAdd size={20} /></NewTab>
        <WindowButton aria-label="Minimize"><Svg size={10} viewBox="0 0 10 10"><path d="M0 5.500h10" stroke="#000" /></Svg></WindowButton>
        <WindowButton aria-label="Restore"><Svg size={10} viewBox="0 0 10 10"><path d="M.5 2.500h7v7h-7zM2.500 2.500v-2h7v7h-2" stroke="#000" /></Svg></WindowButton>
        <WindowButton aria-label="Close"><Svg size={10} viewBox="0 0 10 10"><path d="m0 0 10 10M10 0 0 10" stroke="#000" /></Svg></WindowButton>
      </TabStrip>

      <Toolbar>
        <ToolButton aria-label="Back"><MdArrowBack size={20} /></ToolButton>
        <ToolButton aria-label="Forward" $faded><MdArrowForward size={20} /></ToolButton>
        <ToolButton aria-label="Stop"><MdClose size={20} /></ToolButton>
        <AddressBar>
          <MdLock size={16} />
          <Url aria-label="Address" defaultValue="latlong.net/Show-Latitude-Longitude.html" />
          <MdStarBorder size={18} />
        </AddressBar>
        {extensionIcons.map(([name, icon]) => <ToolButton key={name} aria-label={name}>{icon}</ToolButton>)}
        <ToolButton aria-label="Extensions"><MdExtension size={18} /></ToolButton>
        <ToolButton aria-label="Profile"><Avatar /></ToolButton>
        <ToolButton aria-label="Menu"><MdMoreVert size={20} /></ToolButton>
      </Toolbar>

      <Bookmarks aria-label="Bookmarks">
        {bookmarks.map(([title, width, icon]) => (
          <Bookmark key={title} href="#" $width={width}>{icon}{title}</Bookmark>
        ))}
        <More aria-label="More bookmarks">»</More>
      </Bookmarks>

      <Viewport>
        <Main>
          <Column>
            <Paragraph>subdivision and country name can be found.</Paragraph>
            <Panel>
              <Form onSubmit={(e) => e.preventDefault()}>
                <Field>
                  <Label htmlFor="lat">Latitude</Label>
                  <TextInput id="lat" defaultValue="12.9719" />
                  <Hint>Example: 40.785091</Hint>
                </Field>
                <Field>
                  <Label htmlFor="lng">Longitude</Label>
                  <TextInput id="lng" defaultValue="77.5937" />
                  <Hint>Example: -73.968285</Hint>
                </Field>
                <Convert type="submit">Convert</Convert>
              </Form>
              <AddressTitle>Reverse geocoded address:</AddressTitle>
              <Address>
                Kasturba Road, Bengaluru, Karnataka, 560001<br />
                Cubbon Park Bengaluru India
              </Address>
              <Notice>Please <Link href="#">Register free</Link> to get more free geocoding process.</Notice>
              <div>Latitude range is from 0 to 90 and longitude is range from 0 to 180.</div>
            </Panel>
            <MapBox>
              <CityMap />
              <Pin width="25" height="41" viewBox="0 0 25 41" aria-hidden="true">
                <path d="M12.500.5C5.500.5.500 6 .500 12.500c0 7 7 14 12 28 5-14 12-21 12-28C24.500 6 19.500.5 12.500.5z" fill="#2a81cb" stroke="#226aa8" />
                <circle cx="12.500" cy="12.500" r="4.500" fill="#fff" />
              </Pin>
              <ZoomBar>
                <ZoomButton aria-label="Zoom in"><Svg size={12} viewBox="0 0 12 12"><path d="M0 6h12M6 0v12" stroke="#000" strokeWidth="2" /></Svg></ZoomButton>
                <ZoomButton aria-label="Zoom out"><Svg size={12} viewBox="0 0 12 12"><path d="M0 6h12" stroke="#000" strokeWidth="2" /></Svg></ZoomButton>
              </ZoomBar>
              <Popup>12.971900,77.593700<PopupClose aria-label="Close popup">×</PopupClose></Popup>
            </MapBox>
          </Column>
        </Main>
        <ScrollBar>
          <ScrollArrow aria-label="Scroll up"><Svg size={8} viewBox="0 0 8 8"><path d="m0 6 4-4 4 4z" fill="#505050" /></Svg></ScrollArrow>
          <ScrollThumb />
          <ScrollArrow aria-label="Scroll down"><Svg size={8} viewBox="0 0 8 8"><path d="m0 2 4 4 4-4z" fill="#505050" /></Svg></ScrollArrow>
        </ScrollBar>
        <StatusBubble>Waiting for googleads.g.doubleclick.net...</StatusBubble>
      </Viewport>

      <Taskbar>
        <TaskButton aria-label="Start" $width={48}><WindowsLogo /></TaskButton>
        <SearchBox><Magnifier /><SearchInput aria-label="Search" placeholder="Type here to search" /></SearchBox>
        <TaskButton aria-label="Cortana" $width={48}><Svg><circle cx="8" cy="8" r="6.700" stroke="#fff" strokeWidth="2" /></Svg></TaskButton>
        <TaskButton aria-label="Task view" $width={48}><TaskView /></TaskButton>
        <Apps>
          <TaskButton aria-label="File Explorer"><Explorer /></TaskButton>
          <TaskButton aria-label="Excel" $line={blue}><Excel /></TaskButton>
          <TaskButton aria-label="Chrome" $bg="#4c4a4f" $line={blue}><Chrome /></TaskButton>
          <TaskButton aria-label="Dreamweaver" $line={blue}><Dreamweaver /></TaskButton>
          <TaskButton aria-label="WinSCP" $bg="#a65c28" $line="#ff7a0f"><RemoteLock /></TaskButton>
          <TaskButton aria-label="Sticky Notes" $line={blue}><Sticky /></TaskButton>
          <TaskButton aria-label="Skype" $line={blue}><Skype /></TaskButton>
          <TaskButton aria-label="Notepad" $line={blue}><Notepad /></TaskButton>
        </Apps>
        <TrayItem aria-label="Hidden icons" $width={24}><Svg size={12} viewBox="0 0 12 12"><path d="m0 9 6-6 6 6" stroke="#fff" strokeWidth="1.300" /></Svg></TrayItem>
        <TrayItem aria-label="Volume" $width={24}><Svg stroke="#fff"><path d="M.5 5.500h3l3-3v11l-3-3h-3zM8.500 6c1 1 1 3 0 4M10.500 4c2 2 2 6 0 8M12.500 2c3.500 3 3.500 9 0 12" /></Svg></TrayItem>
        <TrayItem aria-label="Battery" $width={24}><Svg><path d="M.5 4.500h13v7H.500zM14 6.500h1.500v3H14" stroke="#fff" /><path d="M2 6h4v4H2z" fill="#fff" /></Svg></TrayItem>
        <TrayItem $width={34}>ENG</TrayItem>
        <TrayItem $width={74}><span>04:08 PM</span><span>03-09-2020</span></TrayItem>
        <TrayItem aria-label="17 notifications" $width={40}>
          <svg width="26" height="26" viewBox="0 0 26 26" aria-hidden="true">
            <path d="M1 2h16v12H6l-3 3v-3H1z" fill="#fff" /><path d="M4 5.500h10M4 8h10M4 10.500h6" stroke="#1f1c21" />
            <circle cx="16.500" cy="17.500" r="8" fill="#3b393d" stroke="#b5b4b6" />
            <text x="16.500" y="21.500" fontSize="11" fontWeight="600" textAnchor="middle" fontFamily="Open Sans" fill="#fff">17</text>
          </svg>
        </TrayItem>
        <ShowDesktop aria-label="Show desktop" />
      </Taskbar>
    </Screen>
  );
}
